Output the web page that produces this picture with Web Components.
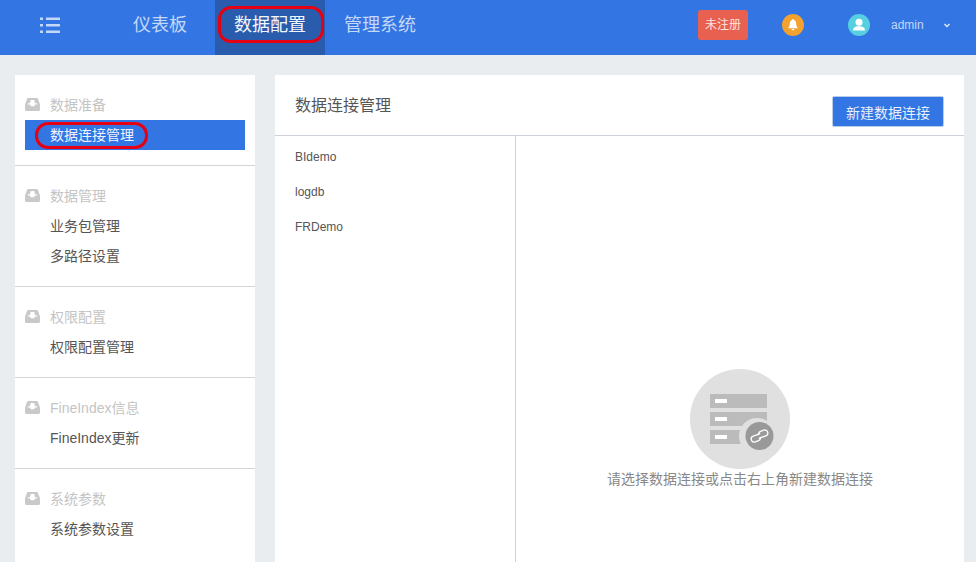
<!DOCTYPE html>
<html lang="zh">
<head>
<meta charset="utf-8">
<title>数据连接管理</title>
<style>
    html, body { margin: 0; height: 100%; overflow: hidden; }
    body {
        background: #e9edf0;
        font-family: "Liberation Sans", "Noto Sans CJK SC", sans-serif;
    }
</style>
</head>
<body>
<app-shell>
    <top-bar slot="top">
        <nav-tab>仪表板</nav-tab>
        <nav-tab active circled>数据配置</nav-tab>
        <nav-tab>管理系统</nav-tab>
    </top-bar>
    <side-menu slot="side">
        <menu-group titulo="数据准备">
            <menu-item active circled>数据连接管理</menu-item>
        </menu-group>
        <menu-group titulo="数据管理">
            <menu-item>业务包管理</menu-item>
            <menu-item>多路径设置</menu-item>
        </menu-group>
        <menu-group titulo="权限配置">
            <menu-item>权限配置管理</menu-item>
        </menu-group>
        <menu-group titulo="FineIndex信息">
            <menu-item>FineIndex更新</menu-item>
        </menu-group>
        <menu-group titulo="系统参数">
            <menu-item>系统参数设置</menu-item>
        </menu-group>
    </side-menu>
    <connection-panel slot="main">
        <connection-row>BIdemo</connection-row>
        <connection-row>logdb</connection-row>
        <connection-row>FRDemo</connection-row>
    </connection-panel>
</app-shell>

<script>
class AppShell extends HTMLElement {
    constructor() {
        super();
        this.attachShadow({ mode: 'open' });
    }

    connectedCallback() {
        this.shadowRoot.innerHTML = `
            <style>
                :host { display: block; height: 100vh; overflow: hidden; }
                .cuerpo {
                    display: grid;
                    grid-template-columns: 240px 689px;
                    column-gap: 20px;
                    padding: 20px 12px 0 15px;
                }
            </style>
            <slot name="top"></slot>
            <div class="cuerpo">
                <slot name="side"></slot>
                <slot name="main"></slot>
            </div>
        `;
    }
}

class TopBar extends HTMLElement {
    constructor() {
        super();
        this.attachShadow({ mode: 'open' });
    }

    connectedCallback() {
        this.shadowRoot.innerHTML = `
            <style>
                :host {
                    display: flex;
                    align-items: stretch;
                    height: 55px;
                    background: #3375e3;
                    color: #c4d8f8;
                }
                .menu { width: 114px; padding: 17px 0 0 40px; box-sizing: border-box; }
                .menu svg { display: block; }
                .tabs { display: flex; flex: 1; }
                .derecha { display: flex; align-items: center; height: 50px; }
                .registro {
                    width: 50px;
                    height: 30px;
                    margin-right: 34px;
                    border-radius: 3px;
                    background: #e8604f;
                    color: #fbe3e0;
                    font-size: 12px;
                    line-height: 30px;
                    text-align: center;
                }
                .circulo { display: block; width: 22px; height: 22px; }
                .campana { margin-right: 44px; }
                .usuario { font-size: 12px; margin-left: 21px; width: 33px; }
                .flecha { display: block; margin: 0 26px 0 20px; }
            </style>
            <div class="menu">
                <svg width="21" height="16" viewBox="0 0 21 16" fill="currentColor">
                    <rect x="0" y="0.5" width="3" height="2.500"/>
                    <rect x="6" y="0.5" width="14" height="2.500"/>
                    <rect x="0" y="7" width="3" height="2.500"/>
                    <rect x="6" y="7" width="14" height="2.500"/>
                    <rect x="0" y="13.500" width="3" height="2.500"/>
                    <rect x="6" y="13.500" width="14" height="2.500"/>
                </svg>
            </div>
            <div class="tabs"><slot></slot></div>
            <div class="derecha">
                <div class="registro">未注册</div>
                <svg class="circulo campana" viewBox="0 0 22 22">
                    <circle cx="11" cy="11" r="11" fill="#f3a12f"/>
                    <path d="M11 5c.6 0 .9.4.9.9 1.500.4 2.300 1.700 2.300 3.400 0 2.200.5 3.200 1.300 4.100v.8H6.500v-.8c.8-.9 1.300-1.900 1.300-4.100 0-1.700.8-3 2.300-3.400 0-.5.3-.9.9-.9z" fill="#fff"/>
                    <path d="M9.600 15h2.800c0 .8-.6 1.300-1.400 1.300s-1.400-.5-1.400-1.300z" fill="#fff"/>
                </svg>
                <svg class="circulo" viewBox="0 0 22 22">
                    <circle cx="11" cy="11" r="11" fill="#56cfe1"/>
                    <circle cx="11" cy="8.300" r="3.500" fill="#fff"/>
                    <path d="M5 16.500c0-3 2.500-4.300 6-4.300s6 1.300 6 4.300z" fill="#fff"/>
                </svg>
                <span class="usuario">admin</span>
                <svg class="flecha" width="6" height="5" viewBox="0 0 6 5" fill="none" stroke="#e6effc" stroke-width="1.300">
                    <path d="M.5 1l2.500 2.500L5.500 1"/>
                </svg>
            </div>
        `;
    }
}

class NavTab extends HTMLElement {
    constructor() {
        super();
        this.attachShadow({ mode: 'open' });
    }

    connectedCallback() {
        const marca = this.hasAttribute('circled') ? '<span class="marca"></span>' : '';
        this.shadowRoot.innerHTML = `
            <style>
                :host {
                    display: block;
                    position: relative;
                    padding: 0 19px;
                    font-size: 18px;
                    line-height: 50px;
                    height: 55px;
                }
                :host(:first-child) { margin-right: 9px; }
                :host([active]) { background: #2a5cad; color: #f1f5fc; }
                .marca {
                    position: absolute;
                    left: 3px;
                    top: 6px;
                    width: 106px;
                    height: 37px;
                    box-sizing: border-box;
                    border: 3px solid #e60012;
                    border-radius: 13px;
                }
            </style>
            <slot></slot>${marca}
        `;
    }
}

class SideMenu extends HTMLElement {
    constructor() {
        super();
        this.attachShadow({ mode: 'open' });
    }

    connectedCallback() {
        this.shadowRoot.innerHTML = `
            <style>
                :host { display: block; background: #fff; height: 600px; }
            </style>
            <slot></slot>
        `;
    }
}

class MenuGroup extends HTMLElement {
    constructor() {
        super();
        this.attachShadow({ mode: 'open' });
    }

    connectedCallback() {
        this.shadowRoot.innerHTML = `
            <style>
                :host {
                    display: block;
                    padding: 15px 10px;
                    border-bottom: 1px solid #d3d5da;
                }
                :host(:last-child) { border-bottom: 0; }
                .titulo {
                    display: flex;
                    align-items: center;
                    height: 30px;
                    box-sizing: border-box;
                    padding-bottom: 2px;
                    color: #c4c4c4;
                    font-size: 14px;
                }
                svg { display: block; width: 15px; height: 13px; margin-right: 10px; }
            </style>
            <div class="titulo">
                <svg viewBox="0 0 15 13">
                    <path fill="#c9c9c9" d="M3.200 0h8.600c.5 0 .9.300 1.100.7L15 6.500V11.500c0 .8-.6 1.500-1.500 1.500h-12C.6 13 0 12.300 0 11.500V6.500L2.100.7C2.300.3 2.700 0 3.200 0z"/>
                    <path fill="#fff" d="M5.800 2h3.400l.9 3.200h1.800l.5 1.300H10L9.200 8.200H5.800L5 6.500H2.600l.5-1.300h1.800z"/>
                </svg>
                <span>${this.getAttribute('titulo')}</span>
            </div>
            <slot></slot>
        `;
    }
}

class MenuItem extends HTMLElement {
    constructor() {
        super();
        this.attachShadow({ mode: 'open' });
    }

    connectedCallback() {
        const marca = this.hasAttribute('circled') ? '<span class="marca"></span>' : '';
        this.shadowRoot.innerHTML = `
            <style>
                :host {
                    display: block;
                    position: relative;
                    height: 30px;
                    padding-left: 25px;
                    color: #555;
                    font-size: 14px;
                    line-height: 30px;
                }
                :host([active]) { background: #3375e3; color: #eef4fd; }
                .marca {
                    position: absolute;
                    left: 10px;
                    top: 2px;
                    width: 113px;
                    height: 27px;
                    box-sizing: border-box;
                    border: 3px solid #e60012;
                    border-radius: 13px;
                }
            </style>
            <slot></slot>${marca}
        `;
    }
}

class ConnectionPanel extends HTMLElement {
    constructor() {
        super();
        this.attachShadow({ mode: 'open' });
    }

    connectedCallback() {
        this.shadowRoot.innerHTML = `
            <style>
                :host { display: block; background: #fff; height: 600px; }
                header {
                    display: flex;
                    justify-content: space-between;
                    height: 61px;
                    box-sizing: border-box;
                    padding: 0 20px;
                    border-bottom: 1px solid #cdd2da;
                }
                h1 {
                    margin: 0;
                    color: #555;
                    font-size: 16px;
                    font-weight: normal;
                    line-height: 61px;
                }
                button {
                    width: 112px;
                    height: 31px;
                    margin-top: 21px;
                    padding: 0;
                    border: 1px solid #b9cdea;
                    border-radius: 2px;
                    background: #3375e3;
                    color: #e6effc;
                    font: inherit;
                    font-size: 14px;
                }
                .cuerpo { display: grid; grid-template-columns: 241px 1fr; min-height: 539px; }
                .lista { padding-top: 4px; border-right: 1px solid #cdd2da; }
                .vacio {
                    display: flex;
                    flex-direction: column;
                    align-items: center;
                    padding-top: 233px;
                    color: #888;
                    font-size: 14px;
                    line-height: 20px;
                }
                svg { display: block; width: 100px; height: 100px; }
            </style>
            <header>
                <h1>数据连接管理</h1>
                <button>新建数据连接</button>
            </header>
            <div class="cuerpo">
                <div class="lista"><slot></slot></div>
                <div class="vacio">
                    <svg viewBox="0 0 100 100">
                        <circle cx="50" cy="50" r="50" fill="#e0e0e0"/>
                        <rect x="20" y="25" width="57" height="14" fill="#bbb"/>
                        <rect x="20" y="43" width="57" height="14" fill="#bbb"/>
                        <rect x="20" y="61" width="57" height="14" fill="#bbb"/>
                        <rect x="25" y="30" width="12" height="4" fill="#fff"/>
                        <rect x="25" y="48" width="12" height="4" fill="#fff"/>
                        <rect x="25" y="66" width="12" height="4" fill="#fff"/>
                        <circle cx="67" cy="67" r="18" fill="#e0e0e0"/>
                        <circle cx="69.500" cy="67" r="14" fill="#999"/>
                        <g fill="none" stroke="#fff" stroke-width="1.300" stroke-linecap="round" transform="rotate(-20 69.500 67)">
                            <path d="M70.500 65h-7a3 3 0 0 0 0 6h3.500a3 3 0 0 0 2.600-1.500"/>
                            <path d="M68.500 69h7a3 3 0 0 0 0-6h-3.500a3 3 0 0 0-2.600 1.500"/>
                        </g>
                    </svg>
                    <div>请选择数据连接或点击右上角新建数据连接</div>
                </div>
            </div>
        `;
    }
}

class ConnectionRow extends HTMLElement {
    constructor() {
        super();
        this.attachShadow({ mode: 'open' });
    }

    connectedCallback() {
        this.shadowRoot.innerHTML = `
            <style>
                :host {
                    display: block;
                    height: 35px;
                    padding-left: 20px;
                    color: #555;
                    font-size: 12px;
                    line-height: 35px;
                }
            </style>
            <slot></slot>
        `;
    }
}

customElements.define('app-shell', AppShell);
customElements.define('top-bar', TopBar);
customElements.define('nav-tab', NavTab);
customElements.define('side-menu', SideMenu);
customElements.define('menu-group', MenuGroup);
customElements.define('menu-item', MenuItem);
customElements.define('connection-panel', ConnectionPanel);
customElements.define('connection-row', ConnectionRow);
</script>
</body>
</html>
